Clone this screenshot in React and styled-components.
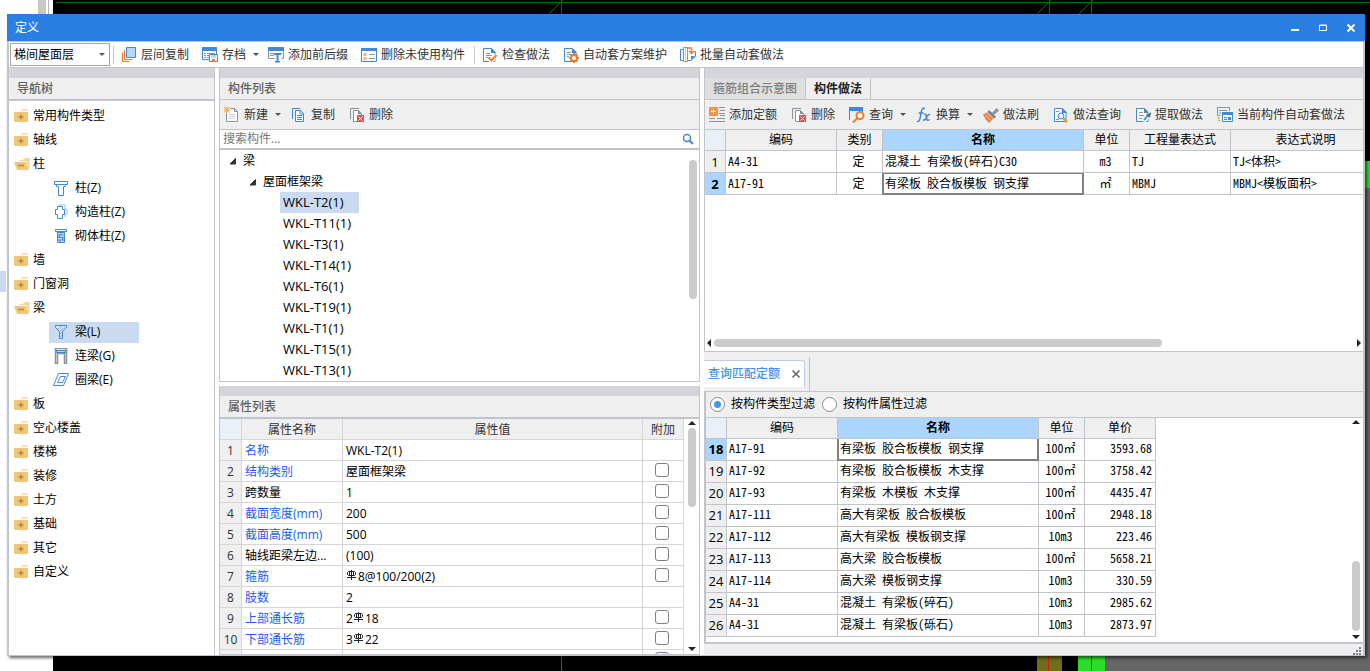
import { useState } from "react";
import styled, { createGlobalStyle, css } from "styled-components";

const line = "#c0c4cb";
const blue = "#4189d8";
const orange = "#ed7d31";
const slate = "#87939d";

// Data
const navItems = [
  { label: "常用构件类型" },
  { label: "轴线" },
  {
    label: "柱",
    children: [
      { label: "柱(Z)", icon: "column" },
      { label: "构造柱(Z)", icon: "structColumn" },
      { label: "砌体柱(Z)", icon: "brickColumn" },
    ],
  },
  { label: "墙" },
  { label: "门窗洞" },
  {
    label: "梁",
    children: [
      { label: "梁(L)", icon: "beam" },
      { label: "连梁(G)", icon: "linkBeam" },
      { label: "圈梁(E)", icon: "ringBeam" },
    ],
  },
  { label: "板" },
  { label: "空心楼盖" },
  { label: "楼梯" },
  { label: "装修" },
  { label: "土方" },
  { label: "基础" },
  { label: "其它" },
  { label: "自定义" },
];

const components = [
  "WKL-T2(1)",
  "WKL-T11(1)",
  "WKL-T3(1)",
  "WKL-T14(1)",
  "WKL-T6(1)",
  "WKL-T19(1)",
  "WKL-T1(1)",
  "WKL-T15(1)",
  "WKL-T13(1)",
];

// "#" stands for the rebar symbol
const properties = [
  { name: "名称", value: "WKL-T2(1)", link: true },
  { name: "结构类别", value: "屋面框架梁", link: true, check: true },
  { name: "跨数量", value: "1", check: true },
  { name: "截面宽度(mm)", value: "200", link: true, check: true },
  { name: "截面高度(mm)", value: "500", link: true, check: true },
  { name: "轴线距梁左边...", value: "(100)", check: true },
  { name: "箍筋", value: "#8@100/200(2)", link: true, check: true },
  { name: "肢数", value: "2", link: true },
  { name: "上部通长筋", value: "2#18", link: true, check: true },
  { name: "下部通长筋", value: "3#22", link: true, check: true },
  { name: "", value: "", check: true },
];

const methods = [
  { no: 1, code: "A4-31", kind: "定", name: "混凝土 有梁板(碎石)C30", unit: "m3", expr: "TJ", note: "TJ<体积>" },
  { no: 2, code: "A17-91", kind: "定", name: "有梁板 胶合板模板 钢支撑", unit: "㎡", expr: "MBMJ", note: "MBMJ<模板面积>" },
];

const quotas = [
  [18, "A17-91", "有梁板 胶合板模板 钢支撑", "100㎡", "3593.68"],
  [19, "A17-92", "有梁板 胶合板模板 木支撑", "100㎡", "3758.42"],
  [20, "A17-93", "有梁板 木模板 木支撑", "100㎡", "4435.47"],
  [21, "A17-111", "高大有梁板 胶合板模板", "100㎡", "2948.18"],
  [22, "A17-112", "高大有梁板 模板钢支撑", "10m3", "223.46"],
  [23, "A17-113", "高大梁 胶合板模板", "100㎡", "5658.21"],
  [24, "A17-114", "高大梁 模板钢支撑", "10m3", "330.59"],
  [25, "A4-31", "混凝土 有梁板(碎石)", "10m3", "2985.62"],
  [26, "A4-31", "混凝土 有梁板(砾石)", "10m3", "2873.97"],
];

// Icon shapes, all on a 16 x 16 grid
const page = (
  <path d="M1.500 1.500h8l3.500 3.500v9.500H1.500z" fill="#fff" stroke={blue} />
);

const icons = {
  folder: (
    <>
      <path d="M7 2.500q0-1.500 1.500-1.500h4q1.500 0 1.500 1.500z" fill="#f3d49a" />
      <rect x="0" y="4" width="14" height="10" rx="1" fill="#eec77b" />
      <path d="M7 6.500v5M4.500 9h5" stroke="#b98a35" strokeWidth="1.500" />
    </>
  ),
  folderOpen: (
    <>
      <path d="M5 4h4l1-2h5.500v11h-1.500L12.500 5H5z" fill="#f3d49a" />
      <path d="M0 6h12l2.500 8H3z" fill="#eec77b" />
      <path d="M4 9.500h6" stroke="#b98a35" strokeWidth="1.500" />
    </>
  ),
  column: (
    <g fill="#fff" stroke={blue}>
      <path d="M1.500 1.500h13v3h-13z" />
      <path d="M3.500 4.500h9v2h-2v9h-5v-9h-2z" />
    </g>
  ),
  structColumn: (
    <>
      <path d="M6 2.500V1h6v4h2v5h-2v3" fill="none" stroke="#9cc3ee" />
      <path d="M4.500 2.500h5v3h2v5h-2v4h-5v-4h-2v-5h2z" fill="#fff" stroke={blue} />
    </>
  ),
  brickColumn: (
    <>
      <path d="M4.500 4.500h7v10h-7z" fill="#c9defa" stroke={blue} />
      <path d="M2.500 1.500h11v2h-11z" fill="#fff" stroke={blue} />
      <path d="M5 7h6M5 9.500h6M5 12h6M8 5v2M6.500 7v2.500M9.500 9.500V12M7 12v2" stroke={blue} fill="none" />
    </>
  ),
  beam: (
    <>
      <path d="M2.500 1.500h11v2l-4 4v7h-3v-7l-4-4z" fill="#d9e9fb" stroke={blue} />
      <path d="M5 5l4-3M7 7l5-4M7 10l2-2M7 13l2-2" stroke="#7fb0e8" />
    </>
  ),
  linkBeam: (
    <>
      <path d="M2.500.500h11v15h-2v-10h-7v10h-2z" fill="#fff" stroke={slate} strokeWidth="1.500" />
      <path d="M3 2h10v3H3z" fill={blue} />
      <path d="M4 3.500h8" stroke="#b8d5f5" />
    </>
  ),
  ringBeam: (
    <g fill="#fff" stroke={blue}>
      <path d="M5.500 1.500h10l-5 12h-10z" />
      <path d="M7.500 4.500h5l-3 6h-5z" />
    </g>
  ),
  copyFloor: (
    <>
      <path d="M5.500.500h9v10h-9z" fill="#b8d8fb" stroke={blue} />
      <path d="M3.500 3v9.500h8M1.500 5.500v9h7" fill="none" stroke={orange} />
    </>
  ),
  archive: (
    <>
      <path d="M.500.500h14v12H.500z" fill="#fff" stroke={blue} />
      <path d="M0 0h15v4H0z" fill={blue} />
      <path d="M2 6.500h2M5 6.500h8M2 8.500h2M5 8.500h3M2 10.500h2M5 10.500h3" stroke={slate} />
      <path d="M7.500 7.500h8v7h-8z" fill="#fff" stroke={blue} />
      <path d="M9 8h5v3H9z" fill="#b8d8fb" />
      <path d="M10 12h3v3h-3z" fill={orange} />
    </>
  ),
  affix: (
    <>
      <path d="M0 0h16v4H0z" fill={blue} />
      <path d="M.500 4v7.500h6M15.500 4v7.500h-2M2 6.500h5M2 8.500h4M12 6.500h2" stroke={slate} fill="none" />
      <path d="M6 6h7v2H6zM8.500 7h2v8h-2zM7 14h5v1.500H7z" fill={blue} />
    </>
  ),
  unused: (
    <>
      <path d="M.500 1.500h15v13H.500z" fill="#fff" stroke={blue} />
      <path d="M0 1h16v3H0z" fill={blue} />
      <path d="M8 7.500h6M8 11.500h6" stroke={slate} />
      <path d="M2.500 6l3 3M5.500 6l-3 3M2.500 10l3 3M5.500 10l-3 3" stroke={orange} />
    </>
  ),
  check: (
    <>
      {page}
      <path d="M9 1v5h5" fill={blue} />
      <path d="M4 6.500h4M4 8.500h6M4 10.500h3" stroke={slate} />
      <path d="M6 10.500l3.500 3.500L15 8" fill="none" stroke="#fff" strokeWidth="4" />
      <path d="M6.500 10.500L9.500 13.500 14.500 8" fill="none" stroke={orange} strokeWidth="2" />
    </>
  ),
  gear: (
    <>
      {page}
      <path d="M9 1v5h5" fill={blue} />
      <path d="M4 5.500h4M4 7.500h4M4 9.500h2" stroke={slate} />
      <circle cx="11" cy="11" r="3" fill="#fff" stroke={orange} strokeWidth="2" />
      <path d="M11 6v2M11 14v2M6 11h2M14 11h2M7.500 7.500l1.500 1.500M13 13l1.500 1.500M14.500 7.500L13 9M9 13l-1.500 1.500" stroke={orange} strokeWidth="2" />
    </>
  ),
  batch: (
    <>
      <path d="M4 2.500H.500v11H4M8 13.500h3l4.500-4V4.500H13" fill="none" stroke={blue} />
      <path d="M11 9h4l-4 4z" fill={blue} />
      <path d="M3.500.500h4v14h-4z" fill="#fff" stroke={orange} />
      <path d="M5.500 1v13" stroke="#f6c29c" />
      <path d="M7 1h4.500v5M9 4l2.500 2.500L14 4" fill="none" stroke={orange} strokeWidth="1.500" />
    </>
  ),
  create: (
    <>
      <path d="M2.500 1.500h8l3 3v10h-11z" fill="#fff" stroke={slate} />
      <path d="M10.500 1.500v3h3" fill="none" stroke={slate} />
      <path d="M5 7.500h6M5 9.500h6M5 11.500h6" stroke="#cfd4d9" />
      <path d="M0 0h6v6H0z" fill="#fdf0d8" />
      <path d="M0 0l5.500 5.500M5.500 0L0 5.500M3 0v6M0 3h6" stroke="#f0a030" />
    </>
  ),
  copy: (
    <>
      <path d="M1.500 12V1.500H9" fill="none" stroke={blue} />
      <path d="M4.500 3.500h5l3 3v8h-8z" fill="#fff" stroke={blue} />
      <path d="M9 3v4h4M6 8.500h5M6 10.500h5M6 12.500h5" fill="none" stroke={blue} />
    </>
  ),
  remove: (
    <>
      <path d="M1.500 12V1.500H10" fill="none" stroke={slate} />
      <path d="M8 14.500H4.500v-11h5l3 3V8" fill="#fff" stroke={slate} />
      <path d="M9 3v4h4z" fill={slate} />
      <path d="M8 8h7v7H8z" fill="#d9534f" />
      <path d="M9.500 9.500l4 4M13.500 9.500l-4 4" stroke="#fff" />
    </>
  ),
  addQuota: (
    <>
      <path d="M0 0h9v9H0z" fill="#f0954a" />
      <path d="M4.500 2v5M2 4.500h5" stroke="#fff" />
      <path d="M10 .500h6M11 3.500h5M10 6.500h6M11 8.500h5M8 11.500h8M0 11.500h6M0 14.500h16" stroke={slate} />
    </>
  ),
  query: (
    <>
      <path d="M.500 13V1.500h13V6" fill="none" stroke={blue} />
      <path d="M0 0h14v4H0z" fill={blue} />
      <circle cx="11" cy="8.500" r="3.500" fill="#fff" stroke={orange} strokeWidth="2" />
      <path d="M8.500 11L4 15.500" stroke={orange} strokeWidth="2" />
    </>
  ),
  fx: (
    <g fill="none" stroke={blue} strokeWidth="1.500">
      <path d="M9 1.500C6.500.500 5.500 3 5 6S4 15.500 1 14.500M2.500 6h5" />
      <path d="M8 7.500c2-1 2 0 2.500 3s1 3.500 3 2M14 7.500C12 7 11 9 10.500 10.500S9 13.500 7 13" />
    </g>
  ),
  brush: (
    <>
      <path d="M9 6l4.500-5L16 3.500 11 8z" fill="#8795a1" />
      <path d="M6 3l7 7-2 1.500L4.500 5z" fill="#6f7d88" />
      <path d="M4 5.500l6.500 6L6 16Q2 13 0 7.500z" fill="#f0804e" />
      <path d="M3 8l4 5" stroke="#fbc2a3" />
    </>
  ),
  methodQuery: (
    <>
      {page}
      <path d="M9 1v5h5" fill={blue} />
      <path d="M3 4.500h3M3 12.500h3" stroke={slate} />
      <circle cx="8" cy="9" r="3" fill="#e3f0fd" stroke={blue} />
      <path d="M10.500 11.500L14 15" stroke="#f09a35" strokeWidth="3" />
    </>
  ),
  extract: (
    <>
      {page}
      <path d="M9 1v5h5" fill={blue} />
      <path d="M4 5.500h4M4 8.500h5M4 11.500h3" stroke={slate} />
      <path d="M8.500 14.500L15 6.500" stroke="#fff" strokeWidth="4" />
      <path d="M9 13l5-6" stroke="#49a7b8" strokeWidth="2" />
      <path d="M12 7l3 3M14 8l2-2" stroke="#5d6870" strokeWidth="2" />
    </>
  ),
  autoApply: (
    <>
      <path d="M3 8.500H.500v-8h12V4M2 3.500h8M2 6h2" fill="none" stroke={slate} />
      <path d="M1.500 10v3.500H4" fill="none" stroke={orange} strokeDasharray="2 1" />
      <path d="M5.500 5.500h10v9h-10z" fill="#fff" stroke={blue} />
      <path d="M5 5h11v3H5zM7 10h3v1H7zM7 12h3v1H7zM11 10h3v3h-3z" fill={blue} />
    </>
  ),
  search: (
    <>
      <circle cx="7" cy="7" r="3.500" fill="none" stroke={blue} strokeWidth="1.500" />
      <path d="M9.500 9.500L13 13" stroke={blue} strokeWidth="2" />
    </>
  ),
  minimize: <path d="M4 10h8" stroke="#fff" strokeWidth="2" />,
  maximize: <path d="M4.500 5h7v5.500h-7zM4 5.500h8" fill="none" stroke="#fff" />,
  close: <path d="M4.500 4.500l7 7M11.500 4.500l-7 7" stroke="#fff" strokeWidth="2" />,
  closeThin: <path d="M4.500 4.500l7 7M11.500 4.500l-7 7" stroke="#666" strokeWidth="1.500" />,
  expanded: <path d="M10.500 5.500v5.500H5z" fill="#333" stroke="#333" />,
  grip: (
    <path d="M12 5h2v2h-2zM9 8h2v2H9zM12 8h2v2h-2zM6 11h2v2H6zM9 11h2v2H9zM12 11h2v2h-2z" fill="#7b8088" />
  ),
};

function Icon({ name }) {
  return (
    <IconSvg viewBox="0 0 16 16" aria-hidden="true">
      {icons[name]}
    </IconSvg>
  );
}

function Rebar() {
  return (
    <RebarSvg viewBox="0 0 11 11" role="img" aria-label="钢筋">
      <path d="M5.500 0v10M2.500 1.500h6l1 1v2l-1 1h-6l-1-1v-2zM3.500 1.500v4M7.500 1.500v4M1 7.500h9" fill="none" stroke="#222" />
    </RebarSvg>
  );
}

function ToolButton({ icon, label, menu }) {
  return (
    <Tool type="button" $menu={menu}>
      <Icon name={icon} />
      {label}
      {menu && <Caret />}
    </Tool>
  );
}

// Lines of the drawing that stays visible behind the window
function Drawing() {
  return (
    <Canvas viewBox="0 0 1370 671" preserveAspectRatio="xMinYMin slice" aria-hidden="true">
      <rect width="1370" height="671" fill="#000" />
      <rect width="53" height="671" fill="#fff" />
      <rect x="38" width="8" height="14" fill="#c8c8c8" />
      <rect x="48" width="1" height="14" fill="#b4b8c4" />
      <rect y="271" width="6" height="21" fill="#c9daf1" />
      <rect x="1365" y="161" width="5" height="27" fill="#2bdc2b" />
      <rect x="1365" y="188" width="5" height="483" fill="#666" />
      <rect x="1105" y="655" width="265" height="16" fill="#666" />
      <rect x="1037" y="655" width="25" height="16" fill="#6f6d16" />
      <rect x="1078" y="655" width="27" height="16" fill="#2bdc2b" />
      <path d="M56 2.500H1370M561.500 0V14M549 14L563 0M1049.500 0V14M1037 14L1051 0M1091.500 0V14M1079 14L1093 0" stroke="#0a6e0a" fill="none" />
      <path d="M561.500 655v16M1048.500 655v16M1091.500 655v16" stroke="#c81e1e" fill="none" />
    </Canvas>
  );
}

function NavTree() {
  const [active, setActive] = useState("梁(L)");

  return (
    <NavPanel>
      <Strip />
      <PanelTitle $thick>导航树</PanelTitle>
      <NavList>
        {navItems.map(group => (
          <li key={group.label}>
            <NavItem type="button">
              <Icon name={group.children ? "folderOpen" : "folder"} />
              {group.label}
            </NavItem>
            {group.children && (
              <SubList>
                {group.children.map(item => (
                  <li key={item.label}>
                    <SubItem
                      type="button"
                      $active={active === item.label}
                      onClick={() => setActive(item.label)}
                    >
                      <Icon name={item.icon} />
                      {item.label}
                    </SubItem>
                  </li>
                ))}
              </SubList>
            )}
          </li>
        ))}
      </NavList>
    </NavPanel>
  );
}

function ComponentList() {
  const [selected, setSelected] = useState("WKL-T2(1)");

  return (
    <ListPanel>
      <Strip />
      <PanelTitle>构件列表</PanelTitle>
      <SubToolbar>
        <ToolButton icon="create" label="新建" menu />
        <ToolButton icon="copy" label="复制" />
        <ToolButton icon="remove" label="删除" />
      </SubToolbar>
      <SearchRow>
        <SearchInput type="text" aria-label="搜索构件" placeholder="搜索构件..." />
        <Icon name="search" />
      </SearchRow>
      <ScrollArea>
        <Tree>
          <TreeNode $level={0}>
            <Icon name="expanded" />梁
          </TreeNode>
          <TreeNode $level={1}>
            <Icon name="expanded" />屋面框架梁
          </TreeNode>
          {components.map(name => (
            <TreeLeaf
              type="button"
              key={name}
              $active={selected === name}
              onClick={() => setSelected(name)}
            >
              {name}
            </TreeLeaf>
          ))}
        </Tree>
        <VerticalBar>
          <Track $start={7} $size={139} $rest={79}>
            <Thumb />
          </Track>
        </VerticalBar>
      </ScrollArea>
    </ListPanel>
  );
}

function PropertyList() {
  return (
    <PropertyPanel>
      <Strip />
      <PanelTitle $thick>属性列表</PanelTitle>
      <ScrollArea>
        <PropertyScroll>
          <PropertyTable>
            <colgroup>
              <Col $w={22} />
              <Col $w={101} />
              <Col />
              <Col $w={41} />
            </colgroup>
            <thead>
              <tr>
                <th aria-label="序号" />
                <th>属性名称</th>
                <th>属性值</th>
                <th>附加</th>
              </tr>
            </thead>
            <tbody>
              {properties.map((row, i) => (
                <tr key={i}>
                  <th>{row.name && i + 1}</th>
                  <PropertyName $link={row.link}>{row.name}</PropertyName>
                  <PropertyValue>
                    {row.value.split("#").map((part, n) => (
                      <span key={n}>
                        {n > 0 && <Rebar />}
                        {part}
                      </span>
                    ))}
                  </PropertyValue>
                  <CheckCell>
                    {row.check && <Checkbox type="checkbox" aria-label={`附加 ${row.name}`} />}
                  </CheckCell>
                </tr>
              ))}
            </tbody>
          </PropertyTable>
        </PropertyScroll>
        <VerticalBar $arrows>
          <ArrowUp />
          <Track $start={0} $size={79} $rest={137}>
            <Thumb />
          </Track>
          <ArrowDown />
        </VerticalBar>
      </ScrollArea>
    </PropertyPanel>
  );
}

function MethodPanel() {
  return (
    <MethodSection>
      <Strip />
      <Tabs>
        <Tab type="button">箍筋组合示意图</Tab>
        <Tab type="button" $active>构件做法</Tab>
      </Tabs>
      <SubToolbar>
        <ToolButton icon="addQuota" label="添加定额" />
        <ToolButton icon="remove" label="删除" />
        <ToolButton icon="query" label="查询" menu />
        <ToolButton icon="fx" label="换算" menu />
        <ToolButton icon="brush" label="做法刷" />
        <ToolButton icon="methodQuery" label="做法查询" />
        <ToolButton icon="extract" label="提取做法" />
        <ToolButton icon="autoApply" label="当前构件自动套做法" />
      </SubToolbar>
      <TableHolder>
        <DataTable $width={676}>
          <colgroup>
            <Col $w={21} />
            <Col $w={111} />
            <Col $w={46} />
            <Col $w={201} />
            <Col $w={46} />
            <Col $w={101} />
            <Col $w={150} />
          </colgroup>
          <thead>
            <tr>
              <HeadCell aria-label="序号" />
              <HeadCell>编码</HeadCell>
              <HeadCell>类别</HeadCell>
              <HeadCell $current>名称</HeadCell>
              <HeadCell>单位</HeadCell>
              <HeadCell>工程量表达式</HeadCell>
              <HeadCell>表达式说明</HeadCell>
            </tr>
          </thead>
          <tbody>
            {methods.map(row => (
              <tr key={row.no}>
                <RowNumber $current={row.no === 2}>{row.no}</RowNumber>
                <Cell>{row.code}</Cell>
                <Cell $align="center">{row.kind}</Cell>
                <Cell $current={row.no === 2}>{row.name}</Cell>
                <Cell $align="center">{row.unit}</Cell>
                <Cell>{row.expr}</Cell>
                <Cell>{row.note}</Cell>
              </tr>
            ))}
          </tbody>
        </DataTable>
      </TableHolder>
      <HorizontalBar>
        <ArrowLeft />
        <HorizontalTrack>
          <HorizontalThumb />
        </HorizontalTrack>
        <ArrowRight />
      </HorizontalBar>
    </MethodSection>
  );
}

function QuotaPanel() {
  const [filter, setFilter] = useState("type");

  return (
    <QuotaSection>
      <QuotaTabs>
        <QuotaTab>
          查询匹配定额
          <IconButton type="button" aria-label="关闭">
            <Icon name="closeThin" />
          </IconButton>
        </QuotaTab>
      </QuotaTabs>
      <QuotaBody>
        <FilterRow>
          <label>
            <Radio type="radio" name="filter" checked={filter === "type"} onChange={() => setFilter("type")} />
            按构件类型过滤
          </label>
          <label>
            <Radio type="radio" name="filter" checked={filter === "attr"} onChange={() => setFilter("attr")} />
            按构件属性过滤
          </label>
        </FilterRow>
        <ScrollArea>
          <TableHolder>
            <DataTable $width={450}>
              <colgroup>
                <Col $w={21} />
                <Col $w={111} />
                <Col $w={201} />
                <Col $w={46} />
                <Col $w={71} />
              </colgroup>
              <thead>
                <tr>
                  <HeadCell aria-label="序号" />
                  <HeadCell>编码</HeadCell>
                  <HeadCell $current>名称</HeadCell>
                  <HeadCell>单位</HeadCell>
                  <HeadCell>单价</HeadCell>
                </tr>
              </thead>
              <tbody>
                {quotas.map(([no, code, name, unit, price]) => (
                  <tr key={no}>
                    <RowNumber $current={no === 18}>{no}</RowNumber>
                    <Cell>{code}</Cell>
                    <Cell $current={no === 18} $openTop>{name}</Cell>
                    <Cell $align="center">{unit}</Cell>
                    <Cell $align="right">{price}</Cell>
                  </tr>
                ))}
              </tbody>
            </DataTable>
          </TableHolder>
          <VerticalBar $arrows>
            <ArrowUp />
            <Track $start={136} $size={71} $rest={1}>
              <Thumb />
            </Track>
            <ArrowDown />
          </VerticalBar>
        </ScrollArea>
      </QuotaBody>
      <StatusBar>
        <Icon name="grip" />
      </StatusBar>
    </QuotaSection>
  );
}

export default function App() {
  return (
    <>
      <GlobalStyle />
      <Desktop>
        <Drawing />
        <Window>
          <TitleBar>
            <h1>定义</h1>
            <WindowButtons>
              <IconButton type="button" aria-label="最小化"><Icon name="minimize" /></IconButton>
              <IconButton type="button" aria-label="最大化"><Icon name="maximize" /></IconButton>
              <IconButton type="button" aria-label="关闭窗口"><Icon name="close" /></IconButton>
            </WindowButtons>
          </TitleBar>
          <WindowBody>
            <Toolbar>
              <SelectBox>
                <Select aria-label="楼层" defaultValue="梯间屋面层">
                  <option>梯间屋面层</option>
                </Select>
                <Caret />
              </SelectBox>
              <Divider />
              <ToolButton icon="copyFloor" label="层间复制" />
              <ToolButton icon="archive" label="存档" menu />
              <ToolButton icon="affix" label="添加前后缀" />
              <ToolButton icon="unused" label="删除未使用构件" />
              <Divider />
              <ToolButton icon="check" label="检查做法" />
              <ToolButton icon="gear" label="自动套方案维护" />
              <ToolButton icon="batch" label="批量自动套做法" />
            </Toolbar>
            <Panels>
              <NavTree />
              <PanelStack>
                <ComponentList />
                <PropertyList />
              </PanelStack>
              <RightStack>
                <MethodPanel />
                <QuotaPanel />
              </RightStack>
            </Panels>
          </WindowBody>
        </Window>
      </Desktop>
    </>
  );
}

const GlobalStyle = createGlobalStyle`
  * {
    box-sizing: border-box;
  }

  body {
    margin: 0;
    font-family: "Open Sans", "Noto Sans CJK SC", sans-serif;
    font-size: 12px;
    line-height: 20px;
    color: #000;
    background: #000;
  }

  button, input, select {
    font: inherit;
    color: inherit;
    margin: 0;
    padding: 0;
    border: 0;
    background: none;
  }

  h1, h2, ul {
    margin: 0;
    padding: 0;
    font-size: 12px;
    font-weight: 400;
    list-style: none;
  }
`;

const Desktop = styled.div`
  display: flex;
  height: 100vh;
  min-height: 560px;
  padding: 14px 5px 15px 7px;
  position: relative;
  overflow: hidden;
`;

const Canvas = styled.svg`
  position: absolute;
  inset: 0;
  width: 100%;
  height: 100%;
`;

const Window = styled.main`
  display: flex;
  flex-direction: column;
  flex: 1;
  min-width: 0;
  position: relative;
  background: #fff;
  box-shadow: 2px 2px 3px rgba(0, 0, 0, 0.6);
`;

const TitleBar = styled.header`
  display: flex;
  align-items: center;
  justify-content: space-between;
  height: 27px;
  padding: 0 6px 0 8px;
  color: #fff;
  background: #2c7fe2;
`;

const WindowButtons = styled.div`
  display: flex;
  gap: 12px;
`;

const IconButton = styled.button`
  display: flex;
  cursor: pointer;
`;

const IconSvg = styled.svg`
  flex: none;
  width: 16px;
  height: 16px;
`;

const RebarSvg = styled.svg`
  width: 11px;
  height: 11px;
  margin-right: 1px;
`;

const WindowBody = styled.div`
  display: flex;
  flex-direction: column;
  flex: 1;
  min-height: 0;
  border: 1px solid ${line};
  border-width: 1px 2px;
`;

const Toolbar = styled.div`
  display: flex;
  align-items: center;
  gap: 3px;
  height: 26px;
  padding-left: 1px;
  border-bottom: 1px solid ${line};
`;

const Divider = styled.span`
  width: 1px;
  height: 18px;
  background: #c9c9c9;
`;

const SelectBox = styled.div`
  display: flex;
  align-items: center;
  width: 100px;
  height: 23px;
  padding-right: 4px;
  border: 1px solid #a6a6a6;
`;

const Select = styled.select`
  flex: 1;
  min-width: 0;
  height: 20px;
  padding-left: 3px;
  appearance: none;
  outline: none;
`;

const Caret = styled.span`
  border: 3px solid transparent;
  border-top-color: #555;
  border-bottom: 0;
`;

const Tool = styled.button`
  display: flex;
  align-items: center;
  gap: 4px;
  height: 22px;
  padding: 0 ${props => (props.$menu ? 2 : 6)}px 0 4px;
  color: #333;
  white-space: nowrap;
  cursor: pointer;

  ${Caret} {
    margin-left: 3px;
  }

  &:hover {
    background: #e3eefa;
  }
`;

const Panels = styled.div`
  display: grid;
  grid-template-columns: 206px minmax(0, 481fr) minmax(0, 659fr);
  grid-template-rows: minmax(0, 1fr);
  gap: 4px;
  flex: 1;
  min-height: 0;
`;

const NavPanel = styled.nav`
  border-right: 1px solid ${line};
  overflow: hidden;
`;

const Strip = styled.div`
  flex: none;
  height: 10px;
  background: #d4d5da;
`;

const PanelTitle = styled.h2`
  flex: none;
  padding-left: 8px;
  line-height: 21px;
  font-weight: 500;
  color: #606060;
  background: #efefef;
  border-bottom: ${props => (props.$thick ? 2 : 1)}px solid ${line};
`;

const NavList = styled.ul`
  padding: 3px 0 0 5px;
  line-height: 22px;
`;

const NavItem = styled.button`
  display: flex;
  align-items: center;
  gap: 3px;
  height: 24px;
  cursor: pointer;
`;

const SubList = styled.ul`
  padding-left: 35px;

  & li {
    display: flex;
    align-items: center;
    height: 24px;
  }
`;

const SubItem = styled.button`
  display: flex;
  align-items: center;
  gap: 6px;
  width: 90px;
  height: 21px;
  padding-left: 4px;
  cursor: pointer;
  background: ${props => (props.$active ? "#c9daf1" : "none")};
`;

const PanelStack = styled.div`
  display: flex;
  flex-direction: column;
  gap: 4px;
  min-height: 0;
`;

const panel = css`
  display: flex;
  flex-direction: column;
  min-height: 0;
  border: 1px solid ${line};
  border-top: 0;
`;

const ListPanel = styled.section`
  ${panel}
  flex: 314 1 0;
`;

const PropertyPanel = styled.section`
  ${panel}
  flex: 269 1 0;
`;

const SubToolbar = styled.div`
  display: flex;
  flex: none;
  align-items: center;
  gap: 4px;
  height: 30px;
  overflow: hidden;
  background: #efefef;
  border-bottom: 1px solid ${line};
`;

const SearchRow = styled.div`
  display: flex;
  flex: none;
  align-items: center;
  height: 20px;
  padding-right: 3px;
  border-bottom: 2px solid ${line};
`;

const SearchInput = styled.input`
  flex: 1;
  height: 18px;
  padding-left: 3px;
  outline: none;

  &::placeholder {
    color: #757575;
    opacity: 1;
  }
`;

const ScrollArea = styled.div`
  display: flex;
  flex: 1;
  min-height: 0;
`;

const Tree = styled.div`
  display: flex;
  flex-direction: column;
  align-items: flex-start;
  flex: 1;
  overflow: hidden;
`;

const TreeNode = styled.div`
  display: flex;
  flex: none;
  align-items: center;
  gap: 2px;
  height: 21px;
  padding-left: ${props => 5 + props.$level * 20}px;
`;

const TreeLeaf = styled.button`
  flex: none;
  height: 21px;
  min-width: 79px;
  margin-left: 60px;
  padding: 0 3px 1px;
  font-size: 13px;
  text-align: left;
  cursor: pointer;
  background: ${props => (props.$active ? "#c9daf1" : "none")};
`;

const VerticalBar = styled.div`
  display: flex;
  flex: none;
  flex-direction: column;
  align-items: center;
  width: ${props => (props.$arrows ? 15 : 13)}px;
  padding: ${props => (props.$arrows ? "2px 0 3px" : 0)};
`;

// Free space before the thumb, the thumb, and free space after it
const Track = styled.div`
  display: grid;
  flex: 1;
  grid-template-rows:
    minmax(0, ${props => props.$start}fr)
    minmax(0, ${props => props.$size}fr)
    minmax(0, ${props => props.$rest}fr);
  width: 8px;
  margin: 3px 0;
`;

const Thumb = styled.div`
  grid-row: 2;
  background: #cbcbcb;
  border-radius: 4px;
`;

const ArrowUp = styled.span`
  border: 4px solid transparent;
  border-top: 0;
  border-bottom-color: #222;
`;

const ArrowDown = styled.span`
  border: 4px solid transparent;
  border-bottom: 0;
  border-top-color: #222;
`;

const ArrowLeft = styled.span`
  border: 4px solid transparent;
  border-left: 0;
  border-right-color: #222;
`;

const ArrowRight = styled.span`
  border: 4px solid transparent;
  border-right: 0;
  border-left-color: #222;
`;

const Col = styled.col`
  width: ${props => (props.$w ? `${props.$w}px` : "auto")};
`;

const PropertyScroll = styled.div`
  flex: 1;
  min-width: 0;
  overflow: hidden;
`;

const PropertyTable = styled.table`
  width: 100%;
  table-layout: fixed;
  border-spacing: 0;
  line-height: 18px;

  & th,
  & td {
    height: 21px;
    padding: 2px 0 0;
    font-weight: 400;
    border: solid #d6d6d6;
    border-width: 0 1px 1px 0;
  }

  & th {
    color: #333;
    background: #efefef;
  }

  & thead th:first-child {
    background: #eaf0f8;
  }
`;

const PropertyName = styled.td`
  && {
    padding-left: 3px;
  }
  white-space: nowrap;
  color: ${props => (props.$link ? "#1a5cf0" : "#000")};
`;

const PropertyValue = styled.td`
  && {
    padding-left: 3px;
  }
`;

const CheckCell = styled.td`
  && {
    padding: 0 2px 2px 0;
  }
  text-align: center;
  line-height: 0;
`;

const Checkbox = styled.input`
  width: 14px;
  height: 14px;
  appearance: none;
  vertical-align: middle;
  background: #fff;
  border: 1px solid #808080;
  border-radius: 3px;
`;

const RightStack = styled.div`
  display: flex;
  flex-direction: column;
  min-height: 0;
`;

const MethodSection = styled.section`
  display: flex;
  flex-direction: column;
  flex: 283 1 0;
  min-height: 0;
  border: solid ${line};
  border-width: 0 0 1px 1px;
`;

const Tabs = styled.div`
  display: flex;
  flex: none;
  height: 22px;
  background: #efefef;
  border-bottom: 1px solid ${line};
`;

const Tab = styled.button`
  padding: 0 8px;
  line-height: 21px;
  cursor: pointer;
  border-right: 1px solid ${line};
  font-weight: ${props => (props.$active ? 700 : 500)};
  color: ${props => (props.$active ? "#222" : "#808080")};
  background: ${props => (props.$active ? "#efefef" : "#dfdfdf")};
`;

const TableHolder = styled.div`
  flex: 1;
  min-width: 0;
  min-height: 0;
  overflow: hidden;
`;

const DataTable = styled.table`
  width: ${props => props.$width}px;
  table-layout: fixed;
  border-spacing: 0;
`;

const cell = css`
  padding: 0;
  font-weight: 400;
  white-space: nowrap;
  border: solid ${line};
  border-width: 0 1px 1px 0;
`;

const HeadCell = styled.th`
  ${cell}
  height: 21px;
  background: #efefef;

  &:first-child {
    background: #eaf0f8;
  }

  ${props =>
    props.$current &&
    css`
      font-weight: 700;
      background: #abd5ff;
    `}
`;

const RowNumber = styled.th`
  ${cell}
  height: 22px;
  font-size: 13px;
  font-weight: ${props => (props.$current ? 700 : 400)};
  background: ${props => (props.$current ? "#abd5ff" : "#efefef")};
`;

const Cell = styled.td`
  ${cell}
  height: 22px;
  padding: 0 3px 2px ${props => (props.$align === "center" ? 1 : 2)}px;
  line-height: 18px;
  font-family: "Noto Sans Mono CJK SC", "Liberation Mono", "Noto Sans CJK SC", monospace;
  text-align: ${props => props.$align || "left"};

  ${props =>
    props.$current &&
    css`
      border-color: #808080;
      box-shadow: inset -1px -1px #808080, -1px 0 #808080, inset 1px ${props.$openTop ? 0 : "1px"} #808080;
    `}
`;

const HorizontalBar = styled.div`
  display: flex;
  flex: none;
  align-items: center;
  height: 15px;
  padding: 0 2px;
`;

const HorizontalTrack = styled.div`
  flex: 1;
  padding: 0 3px;
`;

const HorizontalThumb = styled.div`
  width: 70%;
  height: 8px;
  background: #cbcbcb;
  border-radius: 4px;
`;

const QuotaSection = styled.section`
  display: flex;
  flex-direction: column;
  flex: 304 1 0;
  min-height: 0;
  background: #efefef;
`;

const QuotaTabs = styled.div`
  display: flex;
  flex: none;
  align-items: center;
  align-self: flex-start;
  height: 34px;
  margin-top: 5px;
  padding-right: 4px;
  border-right: 1px solid ${line};
`;

const QuotaTab = styled.div`
  display: flex;
  align-items: center;
  gap: 8px;
  height: 27px;
  padding-left: 4px;
  font-weight: 500;
  color: #3f92f2;
  background: #fff;
  border: 1px solid #bccbe8;
  border-width: 1px 1px 0 0;
  border-radius: 0 3px 0 0;
`;

const QuotaBody = styled.div`
  display: flex;
  flex-direction: column;
  flex: 1;
  min-height: 0;
  background: #fff;
  border: solid ${line};
  border-width: 1px 0 2px 2px;
`;

const FilterRow = styled.div`
  display: flex;
  flex: none;
  align-items: center;
  gap: 7px;
  height: 26px;
  padding-left: 4px;
  background: #efefef;
  border-bottom: 1px solid ${line};

  & label {
    display: flex;
    align-items: center;
    gap: 6px;
  }
`;

const Radio = styled.input`
  width: 15px;
  height: 15px;
  appearance: none;
  border: 1px solid #8a8a8a;
  border-radius: 50%;
  background: #fff;

  &:checked {
    background: radial-gradient(#3d97f7 0 3px, #fff 4px);
  }
`;

const StatusBar = styled.footer`
  display: flex;
  flex: none;
  justify-content: flex-end;
  align-items: center;
  height: 11px;
  overflow: hidden;
`;
